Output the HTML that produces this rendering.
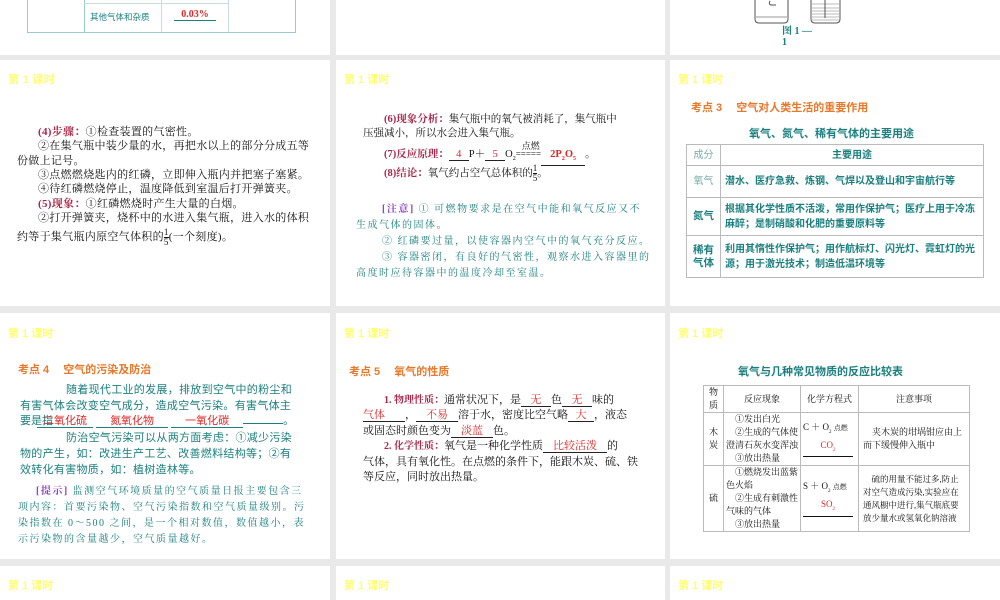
<!DOCTYPE html>
<html><head><meta charset="utf-8"><style>
*{margin:0;padding:0;box-sizing:border-box}
body{width:1000px;height:600px;background:#e9e9e9;position:relative;overflow:hidden;font-family:"Liberation Serif","Noto Serif CJK SC",serif;font-size:11px;color:#111}
.p{position:absolute;background:#fff;overflow:hidden}
.a{position:absolute;white-space:nowrap}
.h{color:#ffff70;font-family:"Liberation Sans","Noto Sans CJK SC",sans-serif;font-weight:bold;font-size:11px}
.s{font-family:"Liberation Sans","Noto Sans CJK SC",sans-serif}
.t{color:#1b7f7f}
.o{color:#e8782a;font-weight:bold;font-family:"Liberation Sans","Noto Sans CJK SC",sans-serif;font-size:11px}
.r{color:#e02828}
.m{color:#a8284a;font-weight:bold}
.u{display:inline-block;border-bottom:1px solid #222;text-align:center;line-height:11px}
.ut{display:inline-block;border-bottom:1px solid #1b7f7f;text-align:center;line-height:11px}
table{border-collapse:collapse;position:absolute}
td{border:1px solid #bbb;padding:0 4px}
.fr{display:inline-block;vertical-align:middle;text-align:center;font-size:9px;line-height:9px}
.fr span{display:block}
.fr span:first-child{border-bottom:1px solid #111}
.c1 .a{letter-spacing:0.3px}
.nt{font-size:10px;letter-spacing:1.5px}
</style></head><body>
<!-- row1 -->
<div class="p" style="left:0;top:0;width:330px;height:55px">
 <div style="position:absolute;left:27px;top:-2px;width:269px;height:35px;border:1px solid #9cc"></div>
 <div style="position:absolute;left:84px;top:0;width:1px;height:32px;background:#9cc"></div>
 <div style="position:absolute;left:161px;top:0;width:1px;height:32px;background:#cdd"></div>
 <div style="position:absolute;left:228px;top:0;width:1px;height:32px;background:#cdd"></div>
 <div style="position:absolute;left:84px;top:3px;width:145px;height:1px;background:#cdd"></div>
 <div class="a t s" style="left:90px;top:11px;font-size:8.5px">其他气体和杂质</div>
 <div class="a r" style="left:174px;top:9px;font-size:10px;font-weight:bold;width:42px;text-align:center;border-bottom:1px solid #1b7f7f">0.03%</div>
</div>
<div class="p" style="left:336px;top:0;width:329px;height:55px"></div>
<div class="p" style="left:670px;top:0;width:330px;height:55px">
 <svg width="330" height="55" style="position:absolute;left:0;top:0">
  <path d="M85 -2 V19 Q85 23 89 23 H114 Q118 23 118 19 V-2" fill="none" stroke="#555"/>
  <path d="M86 17 H117" stroke="#999"/>
  <path d="M100 1 Q98 5 102 5 H106" fill="none" stroke="#555"/>
  <path d="M141 -2 V19 Q141 23 145 23 H166 Q170 23 170 19 V-2" fill="none" stroke="#555"/>
  <path d="M142 4 H169 M142 8 H169 M142 11 H169 M142 14 H169 M142 17 H169 M142 20 H169" stroke="#bbb"/>
  <path d="M155 -2 V18" stroke="#555"/>
 </svg>
 <div class="a t" style="left:112px;top:26px;font-size:10px;font-weight:bold;line-height:11px">图 1 —<br>1</div>
</div>
<!-- row2 -->
<div class="p c1" style="left:0;top:60px;width:330px;height:246px">
 <div class="a h" style="left:8px;top:11px">第 1 课时</div>
 <div class="a" style="left:38px;top:63px"><span class="m">(4)步骤：</span>①检查装置的气密性。</div>
 <div class="a" style="left:38px;top:77px">②在集气瓶中装少量的水，再把水以上的部分分成五等</div>
 <div class="a" style="left:17px;top:92px">份做上记号。</div>
 <div class="a" style="left:38px;top:106px">③点燃燃烧匙内的红磷，立即伸入瓶内并把塞子塞紧。</div>
 <div class="a" style="left:38px;top:120px">④待红磷燃烧停止，温度降低到室温后打开弹簧夹。</div>
 <div class="a" style="left:38px;top:135px"><span class="m">(5)现象：</span>①红磷燃烧时产生大量的白烟。</div>
 <div class="a" style="left:38px;top:149px">②打开弹簧夹，烧杯中的水进入集气瓶，进入水的体积</div>
 <div class="a" style="left:17px;top:168px">约等于集气瓶内原空气体积的<span class="fr"><span>1</span><span>5</span></span>(一个刻度)。</div>
</div>
<div class="p" style="left:336px;top:60px;width:329px;height:246px">
 <div class="a h" style="left:8px;top:11px">第 1 课时</div>
 <div class="a" style="left:48px;top:51px;font-size:10.5px"><span class="m">(6)现象分析：</span>集气瓶中的氧气被消耗了，集气瓶中</div>
 <div class="a" style="left:27px;top:65px;font-size:10.5px">压强减小，所以水会进入集气瓶。</div>
 <div class="a" style="left:48px;top:86px;font-size:10.5px"><span class="m">(7)反应原理：</span><span class="u r" style="width:20px">4</span>P＋<span class="u r" style="width:20px">5</span>O<sub style="font-size:6px">2</sub><span style="position:relative;font-size:9px">=====<span style="position:absolute;left:6px;top:-10px">点燃</span></span><span class="u r" style="width:44px;font-weight:bold">2P<sub style="font-size:6px">2</sub>O<sub style="font-size:6px">5</sub></span>。</div>
 <div class="a" style="left:48px;top:104px;font-size:10.5px"><span class="m">(8)结论：</span>氧气约占空气总体积的<span class="fr"><span>1</span><span>5</span></span>。</div>
 <div class="a t nt" style="left:46px;top:140px"><span style="color:#8a3fc4;font-weight:bold">[注意]</span> ① 可燃物要求是在空气中能和氧气反应又不</div>
 <div class="a t nt" style="left:20px;top:156px">生成气体的固体。</div>
 <div class="a t nt" style="left:46px;top:172px">② 红磷要过量，以使容器内空气中的氧气充分反应。</div>
 <div class="a t nt" style="left:46px;top:188px">③ 容器密闭，有良好的气密性，观察水进入容器里的</div>
 <div class="a t nt" style="left:20px;top:204px">高度时应待容器中的温度冷却至室温。</div>
</div>
<div class="p" style="left:670px;top:60px;width:330px;height:246px">
 <div class="a h" style="left:8px;top:11px">第 1 课时</div>
 <div class="a o" style="left:21px;top:39px">考点 3　 空气对人类生活的重要作用</div>
 <div class="a t s" style="left:79px;top:65px;font-weight:bold;font-size:11px">氧气、氮气、稀有气体的主要用途</div>
 <table class="t s" style="left:16px;top:84px;width:298px;font-size:10px;line-height:15px;font-weight:bold">
  <tr style="height:21px"><td style="width:34px;text-align:center;color:#7aa;font-weight:normal">成分</td><td style="text-align:center">主要用途</td></tr>
  <tr style="height:32px"><td style="text-align:center;color:#7aa;font-weight:normal">氧气</td><td>潜水、医疗急救、炼钢、气焊以及登山和宇宙航行等</td></tr>
  <tr style="height:38px"><td style="text-align:center;font-size:10.5px">氮气</td><td>根据其化学性质不活泼，常用作保护气；医疗上用于冷冻麻醉；是制硝酸和化肥的重要原料等</td></tr>
  <tr style="height:42px"><td style="text-align:center;font-size:10.5px;line-height:13px">稀有<br>气体</td><td>利用其惰性作保护气；用作航标灯、闪光灯、霓虹灯的光源；用于激光技术；制造低温环境等</td></tr>
 </table>
</div>
<!-- row3 -->
<div class="p" style="left:0;top:313px;width:330px;height:246px">
 <div class="a h" style="left:8px;top:12px">第 1 课时</div>
 <div class="a o" style="left:18px;top:48px">考点 4　 空气的污染及防治</div>
 <div class="a t s" style="left:66px;top:68px;font-size:11px;letter-spacing:0.3px">随着现代工业的发展，排放到空气中的粉尘和</div>
 <div class="a t s" style="left:20px;top:84px;font-size:11px;letter-spacing:0.3px">有害气体会改变空气成分，造成空气污染。有害气体主</div>
 <div class="a t s" style="left:20px;top:99px;font-size:11px">要是指<span class="ut r" style="width:56px;margin-left:-16px">二氧化硫</span> <span class="ut r" style="width:72px">氮氧化物</span> <span class="ut r" style="width:72px">一氧化碳</span><span class="ut" style="width:40px"></span>。</div>
 <div class="a t s" style="left:66px;top:116px;font-size:11px;letter-spacing:0.3px">防治空气污染可以从两方面考虑：①减少污染</div>
 <div class="a t s" style="left:20px;top:132px;font-size:11px;letter-spacing:0.3px">物的产生，如：改进生产工艺、改善燃料结构等；②有</div>
 <div class="a t s" style="left:20px;top:148px;font-size:11px;letter-spacing:0.3px">效转化有害物质，如：植树造林等。</div>
 <div class="a t nt" style="left:36px;top:169px"><span style="color:#8a3fc4;font-weight:bold">[提示]</span> 监测空气环境质量的空气质量日报主要包含三</div>
 <div class="a t nt" style="left:18px;top:185px">项内容：首要污染物、空气污染指数和空气质量级别。污</div>
 <div class="a t nt" style="left:18px;top:201px">染指数在 0～500 之间，是一个相对数值，数值越小，表</div>
 <div class="a t nt" style="left:18px;top:217px">示污染物的含量越少，空气质量越好。</div>
</div>
<div class="p" style="left:336px;top:313px;width:329px;height:246px">
 <div class="a h" style="left:8px;top:12px">第 1 课时</div>
 <div class="a o" style="left:13px;top:50px">考点 5　 氧气的性质</div>
 <div class="a" style="left:48px;top:78px"><span class="m" style="font-size:10px">1. 物理性质：</span>通常状况下，是<span class="u r" style="width:30px">无</span>色<span class="u r" style="width:30px">无</span>味的</div>
 <div class="a" style="left:27px;top:93px"><span class="u r" style="width:42px;text-align:left">气体</span>，<span class="u r" style="width:42px">不易</span>溶于水，密度比空气略<span class="u r" style="width:26px">大</span>，液态</div>
 <div class="a" style="left:27px;top:109px">或固态时颜色变为<span class="u r" style="width:42px">淡蓝</span>色。</div>
 <div class="a" style="left:48px;top:124px"><span class="m" style="font-size:10px">2. 化学性质：</span>氧气是一种化学性质<span class="u r" style="width:64px">比较活泼</span>的</div>
 <div class="a" style="left:27px;top:140px">气体，具有氧化性。在点燃的条件下，能跟木炭、硫、铁</div>
 <div class="a" style="left:27px;top:155px">等反应，同时放出热量。</div>
</div>
<div class="p" style="left:670px;top:313px;width:330px;height:246px">
 <div class="a h" style="left:8px;top:12px">第 1 课时</div>
 <div class="a t s" style="left:68px;top:50px;font-weight:bold;font-size:11px">氧气与几种常见物质的反应比较表</div>
 <table style="left:33px;top:72px;width:267px;font-size:9px;line-height:13px;border:1px solid #bbb;table-layout:fixed">
  <tr style="height:27px"><td style="width:20px;text-align:center;padding:0">物<br>质</td><td style="width:77px;text-align:center">反应现象</td><td style="width:58px;text-align:center">化学方程式</td><td style="text-align:center">注意事项</td></tr>
  <tr style="height:53px"><td style="text-align:center;padding:0">木<br>炭</td><td style="padding:0 2px">　①发出白光<br>　②生成的气体使澄清石灰水变浑浊<br>　③放出热量</td><td style="padding:0 2px">C ＋ O<sub style="font-size:5px">2</sub> <span style="font-size:7px">点燃</span><br><span style="display:inline-block;width:50px;border-bottom:1px solid #111;text-align:center;color:#e02828">CO<sub style="font-size:5px">2</sub></span></td><td>　夹木炭的坩埚钳应由上而下缓慢伸入瓶中</td></tr>
  <tr style="height:65px"><td style="text-align:center;padding:0">硫</td><td style="padding:0 2px">　①燃烧发出蓝紫色火焰<br>　②生成有刺激性气味的气体<br>　③放出热量</td><td style="padding:0 2px">S ＋ O<sub style="font-size:5px">2</sub> <span style="font-size:7px">点燃</span><br><span style="display:inline-block;width:50px;border-bottom:1px solid #111;text-align:center;color:#e02828">SO<sub style="font-size:5px">2</sub></span></td><td style="font-size:8.5px">　硫的用量不能过多,防止对空气造成污染,实验应在通风橱中进行,集气瓶底要放少量水或氢氧化钠溶液</td></tr>
 </table>
</div>
<!-- row4 -->
<div class="p" style="left:0;top:566px;width:330px;height:34px"><div class="a h" style="left:8px;top:11px">第 1 课时</div></div>
<div class="p" style="left:336px;top:566px;width:329px;height:34px"><div class="a h" style="left:8px;top:11px">第 1 课时</div></div>
<div class="p" style="left:670px;top:566px;width:330px;height:34px"><div class="a h" style="left:8px;top:11px">第 1 课时</div></div>
</body></html>
